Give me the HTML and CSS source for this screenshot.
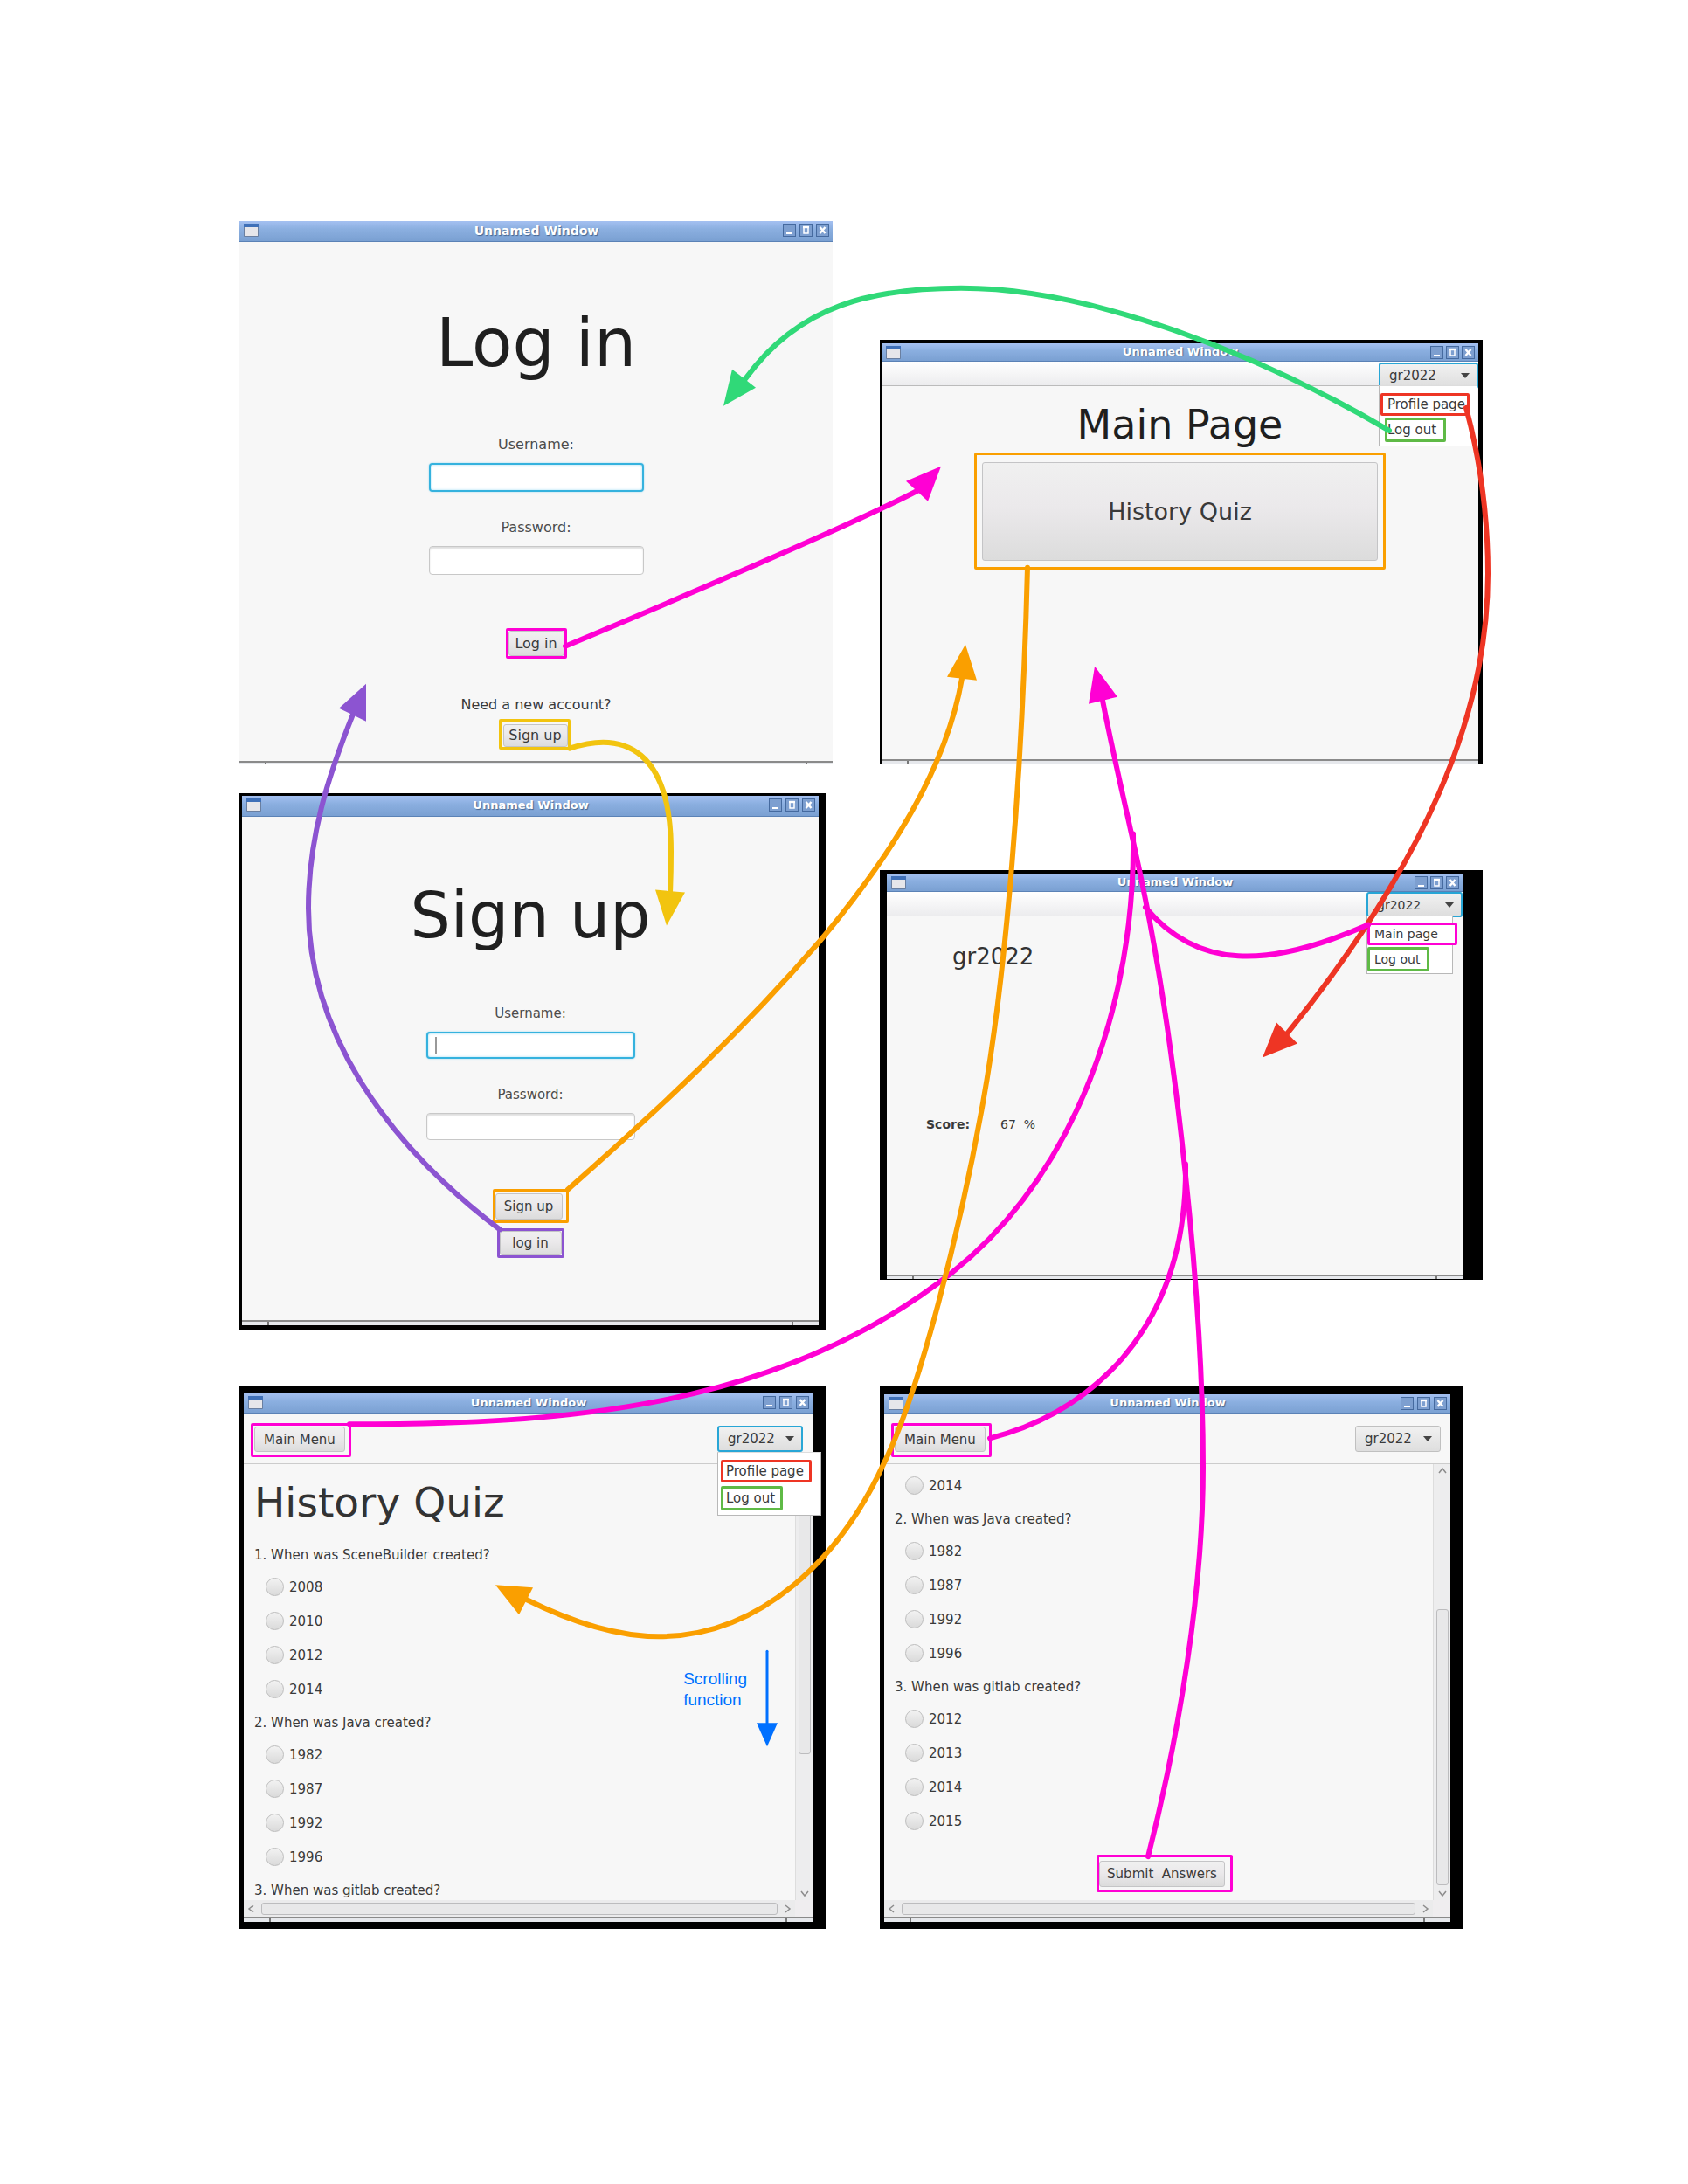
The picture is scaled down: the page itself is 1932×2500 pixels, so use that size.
FILE: index.html
```html
<!DOCTYPE html>
<html lang="en">
<head>
<meta charset="utf-8">
<title>Quiz app – screen flow</title>
<link rel="stylesheet" href="styles.css">
</head>
<body>
<svg class="defs" aria-hidden="true">
  <symbol id="i-app" viewBox="0 0 17 15"><rect x="0" y="0" width="17" height="15" rx="1" fill="#6a7fa0"/><rect x="0" y="0" width="17" height="4" fill="#3f70b8"/><rect x="1" y="4" width="15" height="10" fill="#e6e6ea"/></symbol>
  <symbol id="i-min" viewBox="0 0 15 15"><rect x=".5" y=".5" width="14" height="14" fill="#7d9fd0" stroke="#456a9f"/><path d="M4 11h7" stroke="#fff" stroke-width="2"/></symbol>
  <symbol id="i-max" viewBox="0 0 15 15"><rect x=".5" y=".5" width="14" height="14" fill="#7d9fd0" stroke="#456a9f"/><path d="M5 4v7h5V4z" fill="none" stroke="#fff" stroke-width="1.5"/><path d="M4 4h7" stroke="#fff" stroke-width="2.4"/></symbol>
  <symbol id="i-close" viewBox="0 0 15 15"><rect x=".5" y=".5" width="14" height="14" fill="#7d9fd0" stroke="#456a9f"/><path d="M4.500 4l6 7M10.500 4l-6 7" stroke="#fff" stroke-width="2.400"/></symbol>
  <symbol id="i-chev" viewBox="0 0 16 16"><path d="M4 6l4 5 4-5" fill="none" stroke="#8c8c8c" stroke-width="1.500"/></symbol>
</svg>

<main class="board">
  <div class="column">

    <section class="frame frame--login">
      <header class="titlebar"><svg class="app"><use href="#i-app"/></svg><span class="title">Unnamed Window</span><span class="controls"><svg><use href="#i-min"/></svg><svg><use href="#i-max"/></svg><svg><use href="#i-close"/></svg></span></header>
      <form class="form">
        <h1>Log in</h1>
        <div class="field"><label for="login-user">Username:</label><input class="focused" id="login-user" type="text"></div>
        <div class="field"><label for="login-pass">Password:</label><input id="login-pass" type="password"></div>
        <span class="mark pink submit"><button class="btn" type="button">Log in</button></span>
        <p class="hint">Need a new account?</p>
        <span class="mark yellow alt"><button class="btn" type="button">Sign up</button></span>
      </form>
      <footer class="status"></footer>
    </section>

    <section class="frame frame--signup">
      <header class="titlebar"><svg class="app"><use href="#i-app"/></svg><span class="title">Unnamed Window</span><span class="controls"><svg><use href="#i-min"/></svg><svg><use href="#i-max"/></svg><svg><use href="#i-close"/></svg></span></header>
      <form class="form">
        <h1>Sign up</h1>
        <div class="field"><label for="new-user">Username:</label><span class="entry"><input class="focused" id="new-user" type="text"><i class="caret"></i></span></div>
        <div class="field"><label for="new-pass">Password:</label><input id="new-pass" type="password"></div>
        <span class="mark orange submit"><button class="btn" type="button">Sign up</button></span>
        <span class="mark purple alt"><button class="btn" type="button">log in</button></span>
      </form>
      <footer class="status"></footer>
    </section>

    <section class="frame frame--quiz">
      <header class="titlebar"><svg class="app"><use href="#i-app"/></svg><span class="title">Unnamed Window</span><span class="controls"><svg><use href="#i-min"/></svg><svg><use href="#i-max"/></svg><svg><use href="#i-close"/></svg></span></header>
      <div class="quizbar">
        <span class="mark pink"><button class="btn" type="button">Main Menu</button></span>
        <div class="user">
          <button class="userbtn focused" type="button" aria-haspopup="menu">gr2022<i class="arrow"></i></button>
          <div class="menu"><button class="mark red" type="button">Profile page</button><button class="mark green" type="button">Log out</button></div>
        </div>
      </div>
      <div class="scroller">
        <div class="view">
          <h1>History Quiz</h1>
          <p class="question">1. When was SceneBuilder created?</p>
          <div class="options">
            <label><input type="radio" name="a1">2008</label>
            <label><input type="radio" name="a1">2010</label>
            <label><input type="radio" name="a1">2012</label>
            <label><input type="radio" name="a1">2014</label>
          </div>
          <p class="question">2. When was Java created?</p>
          <div class="options">
            <label><input type="radio" name="a2">1982</label>
            <label><input type="radio" name="a2">1987</label>
            <label><input type="radio" name="a2">1992</label>
            <label><input type="radio" name="a2">1996</label>
          </div>
          <p class="question">3. When was gitlab created?</p>
          <p class="note">Scrolling<br>function</p>
        </div>
        <div class="vbar"><svg class="up"><use href="#i-chev"/></svg><i class="thumb"></i><svg><use href="#i-chev"/></svg></div>
        <div class="hbar"><svg class="left"><use href="#i-chev"/></svg><i class="thumb"></i><svg class="right"><use href="#i-chev"/></svg></div>
        <i class="corner"></i>
      </div>
      <footer class="status"></footer>
    </section>
  </div>

  <div class="column column--right">

    <section class="frame frame--main">
      <header class="titlebar"><svg class="app"><use href="#i-app"/></svg><span class="title">Unnamed Window</span><span class="controls"><svg><use href="#i-min"/></svg><svg><use href="#i-max"/></svg><svg><use href="#i-close"/></svg></span></header>
      <div class="toolbar">
        <div class="user">
          <button class="userbtn focused" type="button" aria-haspopup="menu">gr2022<i class="arrow"></i></button>
          <div class="menu"><button class="mark red" type="button">Profile page</button><button class="mark green" type="button">Log out</button></div>
        </div>
      </div>
      <div class="home">
        <h1>Main Page</h1>
        <span class="mark orange"><button class="btn" type="button">History Quiz</button></span>
      </div>
      <footer class="status"></footer>
    </section>

    <section class="frame frame--profile">
      <header class="titlebar"><svg class="app"><use href="#i-app"/></svg><span class="title">Unnamed Window</span><span class="controls"><svg><use href="#i-min"/></svg><svg><use href="#i-max"/></svg><svg><use href="#i-close"/></svg></span></header>
      <div class="toolbar">
        <div class="user">
          <button class="userbtn focused" type="button" aria-haspopup="menu">gr2022<i class="arrow"></i></button>
          <div class="menu"><button class="mark pink" type="button">Main page</button><button class="mark green" type="button">Log out</button></div>
        </div>
      </div>
      <div class="profile">
        <h1>gr2022</h1>
        <p class="score"><b>Score:</b><span>67&nbsp; %</span></p>
      </div>
      <footer class="status"></footer>
    </section>

    <section class="frame frame--answers">
      <header class="titlebar"><svg class="app"><use href="#i-app"/></svg><span class="title">Unnamed Window</span><span class="controls"><svg><use href="#i-min"/></svg><svg><use href="#i-max"/></svg><svg><use href="#i-close"/></svg></span></header>
      <div class="quizbar">
        <span class="mark pink"><button class="btn" type="button">Main Menu</button></span>
        <div class="user">
          <button class="userbtn" type="button" aria-haspopup="menu">gr2022<i class="arrow"></i></button>
        </div>
      </div>
      <div class="scroller">
        <div class="view">
          <div class="options">
            <label><input type="radio" name="b1">2014</label>
          </div>
          <p class="question">2. When was Java created?</p>
          <div class="options">
            <label><input type="radio" name="b2">1982</label>
            <label><input type="radio" name="b2">1987</label>
            <label><input type="radio" name="b2">1992</label>
            <label><input type="radio" name="b2">1996</label>
          </div>
          <p class="question">3. When was gitlab created?</p>
          <div class="options">
            <label><input type="radio" name="b3">2012</label>
            <label><input type="radio" name="b3">2013</label>
            <label><input type="radio" name="b3">2014</label>
            <label><input type="radio" name="b3">2015</label>
          </div>
          <div class="send"><span class="mark pink"><button class="btn" type="button">Submit&nbsp; Answers</button></span></div>
        </div>
        <div class="vbar"><svg class="up"><use href="#i-chev"/></svg><i class="thumb"></i><svg><use href="#i-chev"/></svg></div>
        <div class="hbar"><svg class="left"><use href="#i-chev"/></svg><i class="thumb"></i><svg class="right"><use href="#i-chev"/></svg></div>
        <i class="corner"></i>
      </div>
      <footer class="status"></footer>
    </section>
  </div>

  <svg class="flows" viewBox="0 0 1932 2500" preserveAspectRatio="none" aria-hidden="true">
    <g class="flow f-green"><path d="M1590 493C1440 405 1250 330 1100 330C1000 330 915 348 853 434"/><polygon points="828,465 838,423 865,444"/></g>
    <g class="flow f-red"><path d="M1678 467C1695 530 1703 590 1703 657C1703 820 1630 990 1472 1185"/><polygon points="1445,1211 1461,1171 1485,1195"/></g>
    <g class="flow f-pink">
      <path d="M647 740Q970 604 1052 561"/><polygon points="1077,534 1037,551 1062,574"/>
      <path d="M400 1631C640 1631 890 1615 1090 1457C1230 1345 1300 1150 1297 955"/>
      <path d="M1133 1647C1200 1630 1250 1595 1285 1555C1340 1490 1358 1410 1357 1333"/>
      <path d="M1566 1059C1450 1110 1370 1110 1311 1039"/>
      <path d="M1314 2126C1350 1985 1377 1820 1377 1680C1377 1480 1345 1200 1311 1030C1295 950 1275 870 1262 802"/><polygon points="1253,763 1246,806 1279,798"/>
    </g>
    <g class="flow f-orange">
      <path d="M650 1362C760 1265 850 1180 939 1077C1020 980 1083 880 1101 777"/><polygon points="1105,738 1084,775 1118,779"/>
      <path d="M1176 650C1170 890 1151 1118 1125 1263C1099 1408 1052 1595 1012 1675C962 1785 870 1874 754 1874C700 1874 645 1853 601 1831"/><polygon points="567,1815 610,1818 594,1849"/>
    </g>
    <g class="flow f-yellow"><path d="M652 857C715 836 768 860 768 975Q768 1000 767 1022"/><polygon points="763,1060 750,1019 784,1022"/></g>
    <g class="flow f-purple"><path d="M572 1408C440 1308 353 1180 353 1040C353 960 375 890 404 818"/><polygon points="419,783 388,811 419,826"/></g>
    <g class="flow f-blue"><path d="M878 1891V1975"/><polygon points="878,2000 866,1973 890,1973"/></g>
  </svg>
</main>
</body>
</html>
```
FILE: styles.css
```css
* { box-sizing: border-box; }

body {
  margin: 0;
  background: #fff;
  color: #3a3a3a;
  font: 15px/20px "DejaVu Sans", sans-serif;
}

h1, p { margin: 0; font-weight: 400; }
h1 { color: #1f1f1f; }
button, input { font: inherit; color: inherit; margin: 0; }
i { display: block; }

.defs { position: absolute; width: 0; height: 0; }

/* board */
.board {
  position: relative;
  display: grid;
  grid-template-columns: 679fr 690fr;
  gap: 54px;
  padding: 253px 235px 291px 274px;
}
.column { display: flex; flex-direction: column; }
.column--right { padding-top: 136px; }

.flows { position: absolute; z-index: 2; inset: 0; width: 100%; height: 100%; pointer-events: none; }
.flow path { fill: none; stroke: currentColor; stroke-width: 6; stroke-linecap: round; }
.flow polygon { fill: currentColor; }
.flow.f-blue path { stroke-width: 3; }

.f-green { color: #30d978; }
.pink, .f-pink { --mark: #ff00d4; }
.f-pink { color: #ff00d4; }
.orange { --mark: #fa9f00; }
.f-orange { color: #fa9f00; }
.yellow { --mark: #f2c40f; }
.f-yellow { color: #f2c40f; }
.purple { --mark: #8c54d1; }
.f-purple { color: #8c54d1; }
.red { --mark: #ee3524; }
.f-red { color: #ee3524; }
.green { --mark: #5fba46; }
.f-blue { color: #0070ff; }

/* windows */
.frame { background: #000; }
.frame--login { background: none; }
.frame--signup { margin: 33px 8px 0 0; padding: 3px 8px 6px 3px; }
.frame--quiz { margin: 64px 8px 0 0; padding: 8px 15px 8px 5px; }
.frame--main { padding: 4px 5px 0 2px; }
.frame--profile { margin-top: 121px; padding: 4px 23px 1px 8px; }
.frame--answers { margin: 122px 23px 0 0; padding: 9px 14px 8px 5px; }

.titlebar {
  display: grid;
  grid-template-columns: 1fr auto 1fr;
  align-items: center;
  height: 24px;
  padding: 0 4px 2px 5px;
  background: linear-gradient(#a4c0f1, #8bafe0 40%, #7aa0d2);
  border-bottom: 1px solid #5b82b6;
}
.frame--main .titlebar, .frame--profile .titlebar { height: 21px; }
.frame--answers .titlebar { height: 23px; }
.title {
  color: #fff;
  font-size: 13px;
  font-weight: 700;
  line-height: 20px;
  text-shadow: 1px 1px 1px #45658f;
}
.frame--login .title { font-size: 14px; }
.app { width: 17px; height: 15px; }
.controls { display: flex; justify-content: flex-end; gap: 4px; }
.controls svg { width: 15px; height: 15px; }
.frame--main .controls, .frame--profile .controls { gap: 3px; }

.status {
  height: 6px;
  background: linear-gradient(#8a8a8a 2px, transparent 2px),
    linear-gradient(90deg, transparent 29px, #777 29px, #777 31px, transparent 31px, transparent calc(100% - 31px), #777 calc(100% - 31px), #777 calc(100% - 29px), transparent calc(100% - 29px)),
    #e6e8ec;
}
.frame--login .status { height: 4px; }
.frame--profile .status { height: 5px; }

/* annotated controls */
.mark {
  display: flex;
  border: 3px solid var(--mark);
  border-radius: 2px;
}
.btn {
  flex: 1;
  padding: 0;
  border: 1px solid #c4c4c6;
  border-radius: 3px;
  background: linear-gradient(#f0f0f0, #ebe9eb 45%, #dcdcdc);
}

/* log in and sign up */
.form {
  display: flex;
  flex-direction: column;
  align-items: center;
  background: #f7f7f7;
}
.form h1 { line-height: 90px; }
.field { display: flex; flex-direction: column; align-items: center; gap: 11px; }
.field label { color: #4c4c4c; }
.field input {
  display: block;
  width: 246px;
  height: 33px;
  border: 1px solid #c8c8c8;
  border-radius: 4px;
  background: #fff;
  box-shadow: inset 0 2px 2px #dedede;
}
.field .focused { border: 2px solid #35b2de; box-shadow: inset 0 0 3px #9fdcf2, 0 0 2px #8fd6ef; }
.entry { position: relative; }
.caret { position: absolute; left: 10px; top: 6px; width: 2px; height: 20px; background: #999; }

.frame--login .form { padding: 71px 0 13px; font-size: 16px; }
.frame--login h1 { margin-bottom: 61px; font-size: 76px; }
.frame--login .field + .field { margin-top: 31px; }
.frame--login .submit { width: 70px; height: 35px; margin: 61px 0 43px; }
.frame--login .alt { width: 82px; height: 35px; margin: 6px 4px 0 0; padding: 3px 0 0 2px; }

.frame--signup .form { padding: 68px 0 71px; }
.frame--signup h1 { margin-bottom: 57px; font-size: 73px; }
.frame--signup .field input { width: 239px; height: 31px; }
.frame--signup .field + .field { margin-top: 31px; }
.frame--signup .submit { width: 87px; height: 39px; margin: 56px 0 6px; padding: 2px 4px 1px 0; }
.frame--signup .alt { width: 77px; height: 34px; }

/* user menu */
.toolbar {
  display: flex;
  justify-content: flex-end;
  height: 28px;
  background: linear-gradient(#fff, #ececee);
  border-bottom: 1px solid #bbb;
}
.user { position: relative; }
.userbtn {
  display: flex;
  align-items: center;
  justify-content: space-between;
  width: 98px;
  height: 30px;
  padding: 0 9px 0 10px;
  border: 1px solid #c0c0c0;
  border-radius: 3px;
  background: linear-gradient(#f1f1f1, #dedede);
}
.userbtn.focused { padding-right: 8px; border: 2px solid #28a6d6; }
.arrow { border: 5px solid transparent; border-top: 6px solid #444; border-bottom: 0; }
.menu {
  position: absolute;
  z-index: 1;
  top: 100%;
  left: 0;
  display: flex;
  flex-direction: column;
  align-items: flex-start;
  background: #fff;
  border: 1px solid #b8b8b8;
  border-top-color: #ddd;
}
.menu .mark { align-items: center; padding: 0; background: #fff; white-space: nowrap; }

.frame--main .userbtn { width: 114px; }
.frame--main .menu { width: 113px; height: 70px; padding: 8px 0 0 1px; gap: 2px; }
.frame--main .menu .red { flex: none; width: 102px; height: 26px; padding-left: 5px; }
.frame--main .menu .green { flex: none; width: 70px; height: 28px; margin-left: 5px; }

.frame--profile .toolbar { font-size: 14px; }
.frame--profile .userbtn { width: 110px; height: 29px; }
.frame--profile .menu { width: 99px; height: 67px; padding-top: 7px; gap: 2px; }
.frame--profile .menu .pink { width: 103px; height: 26px; padding-left: 5px; flex: none; }
.frame--profile .menu .green { width: 71px; height: 28px; padding-left: 5px; }

.frame--quiz .menu { width: 119px; height: 73px; padding: 8px 0 0 3px; gap: 4px; }
.frame--quiz .menu .red { width: 104px; height: 26px; padding-left: 3px; }
.frame--quiz .menu .green { width: 71px; height: 28px; padding-left: 3px; }

.frame--main .user { padding-top: 1px; }

/* main page */
.home {
  display: flex;
  flex-direction: column;
  align-items: center;
  padding: 16px 0 217px;
  background: #f7f7f7;
}
.home h1 { margin-bottom: 4px; font-size: 46px; line-height: 56px; }
.home .mark { width: 69%; height: 134px; padding: 8px 6px 7px; }
.home .btn { font-size: 27px; }

/* profile */
.profile { padding: 30px 0 162px 45px; background: #f7f7f7; font-size: 14px; }
.profile h1 { margin: 0 0 166px 30px; font-size: 26px; line-height: 32px; color: #333; }
.score { display: flex; gap: 35px; }

/* quiz */
.quizbar {
  display: flex;
  justify-content: space-between;
  align-items: flex-start;
  height: 57px;
  padding: 10px 11px 0 8px;
  background: #f7f7f7;
  border-bottom: 1px solid #ccc;
}
.quizbar .mark.pink { width: 115px; height: 39px; padding: 1px 4px 3px 1px; }
.quizbar .user { padding-top: 3px; }

.scroller {
  position: relative;
  display: grid;
  grid-template: 499px 19px / 1fr 20px;
  background: #f7f7f7;
}
.view { position: relative; overflow: hidden; padding: 16px 12px 0; }
.view h1 { margin-bottom: 22px; font-size: 47px; line-height: 56px; color: #333; }
.options { padding: 7px 0 9px 13px; }
.options label { display: flex; align-items: center; gap: 6px; height: 39px; }
.options input {
  appearance: none;
  width: 21px;
  height: 21px;
  border: 1px solid #bdbdbd;
  border-radius: 50%;
  background: linear-gradient(#f2f2f2, #dadada);
}
.frame--answers .view { padding-top: 5px; }
.frame--answers .options:first-child { padding-top: 0; }
.frame--answers .options { padding-left: 12px; }
.send { display: flex; justify-content: center; padding: 10px 0 0 14px; }
.send .mark { width: 156px; height: 43px; padding: 4px 6px 3px 0; }

.note {
  position: absolute;
  right: 55px;
  top: 234px;
  color: #0070ff;
  font: 19px/24px "Liberation Sans", sans-serif;
}

.vbar {
  display: flex;
  flex-direction: column;
  align-items: center;
  background: #ededee;
  border-left: 1px solid #ddd;
}
.vbar svg, .hbar svg { flex: none; width: 16px; height: 16px; }
.vbar svg:last-child { margin-top: auto; }
.up { transform: rotate(180deg); }
.left { transform: rotate(90deg); }
.right { transform: rotate(-90deg); }
.thumb { border: 1px solid #bcbcbe; border-radius: 3px; background: #e8e8e9; }
.vbar .thumb { width: 14px; height: 316px; }
.frame--answers .vbar .thumb { margin-top: 150px; }
.hbar { display: flex; align-items: center; gap: 3px; padding: 0 1px; background: #ebebec; }
.hbar .thumb { flex: 1; height: 14px; }
.corner { background: #efedef; }
```
